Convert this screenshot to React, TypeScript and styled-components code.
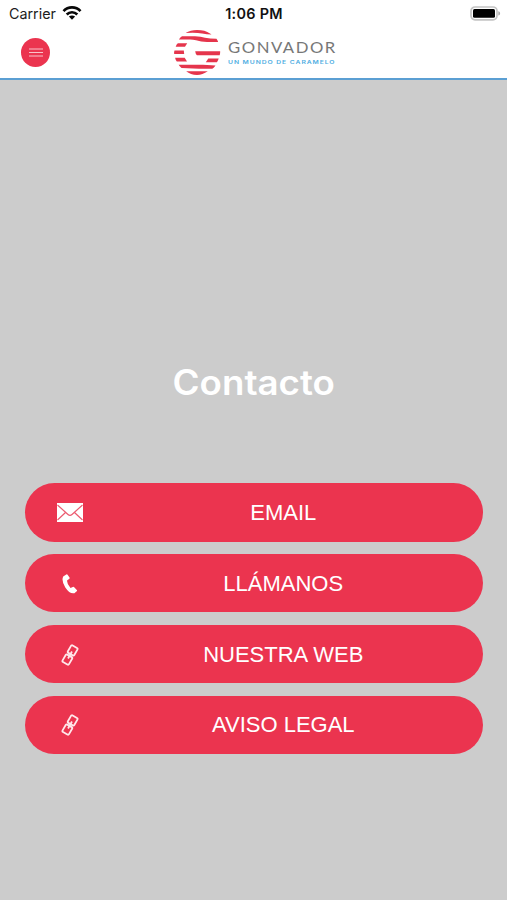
import React from "react";
import styled, { createGlobalStyle } from "styled-components";

const GlobalStyle = createGlobalStyle`
  * { box-sizing: border-box; }
  body { margin: 0; background: #ccc; }
`;

const Screen = styled.div`
  width: 507px;
  height: 900px;
  display: flex;
  flex-direction: column;
  background: #cccccc;
  overflow: hidden;
`;

const StatusBar = styled.div`
  height: 28px;
  display: grid;
  grid-template-columns: 1fr auto 1fr;
  align-items: center;
  padding: 0 6px 0 9px;
  background: #fff;
  color: #1c1c1c;
  font: 400 14.3px/28px Inter, sans-serif;
`;

const Carrier = styled.div`
  display: flex;
  align-items: center;
  gap: 6px;

  svg {
    margin-top: -2px;
  }
`;

const Clock = styled.div`
  font-weight: 600;
  font-size: 14.4px;
  letter-spacing: 0.3px;
  margin-left: -2px;
  color: #111;
`;

const BatterySlot = styled.div`
  display: flex;
  justify-content: flex-end;

  svg {
    margin-top: -2px;
  }
`;

const Header = styled.header`
  height: 52px;
  flex: none;
  display: flex;
  align-items: flex-start;
  background: #fff;
  border-bottom: 2px solid #5b9fd3;
  padding: 1px 0 0 21px;
`;

const MenuButton = styled.button`
  width: 29px;
  height: 29px;
  margin: 8.5px 123px 0 0;
  padding: 0;
  border: 0;
  border-radius: 50%;
  background: #eb344f;
  display: flex;
  align-items: center;
  justify-content: center;
`;

const Brand = styled.div`
  display: flex;
  gap: 6px;
`;

const BrandText = styled.div`
  padding-top: 9px;
  white-space: nowrap;
`;

const BrandName = styled.div`
  font: 400 16px/18px Lato, sans-serif;
  letter-spacing: 1.45px;
  transform: scaleX(1.045);
  transform-origin: left;
  color: #777;
`;

const BrandTagline = styled.div`
  font: 600 5.3px/12px Inter, sans-serif;
  letter-spacing: 0.75px;
  transform: scaleX(1.27);
  transform-origin: left;
  color: #4faee2;
`;

const Main = styled.main`
  flex: 1;
  padding: 281px 24.5px 0 25px;
`;

const Title = styled.h1`
  margin: 0 0 80px;
  font: 600 34.8px/42px Inter, sans-serif;
  transform: scaleX(1.055);
  text-align: center;
  color: #fff;
`;

const Actions = styled.nav`
  display: flex;
  flex-direction: column;
  gap: 12.4px;
`;

const Action = styled.button`
  height: 58.5px;
  display: grid;
  grid-template-columns: 89px 1fr;
  align-items: center;
  padding: 0 30px 0 0;
  border: 0;
  border-radius: 30px;
  background: #eb344f;
  color: #fff;
`;

const IconSlot = styled.span`
  display: flex;
  justify-content: center;
  padding-top: 1px;
`;

const Label = styled.span`
  font: 400 22px/28px "Liberation Sans", sans-serif;
  padding-top: 1px;
`;

const Wifi = () => (
  <svg width="20" height="16" viewBox="0 0 20 16" fill="none" stroke="#080808" strokeWidth="2.7">
    <path d="M1.5 6.1C6.2 1.2 13.8 1.2 18.5 6.1" />
    <path d="M4.7 9.5C7.7 6.5 12.3 6.5 15.3 9.5" />
    <path d="M10 14.7 6.9 11.6C8.7 10 11.3 10 13.1 11.6Z" fill="#080808" stroke="none" />
  </svg>
);

const Battery = () => (
  <svg width="31" height="15" viewBox="0 0 31 15">
    <rect x="1" y="1" width="26" height="12.8" rx="4" fill="#fff" stroke="#c4c4c4" strokeWidth="1.7" />
    <rect x="3" y="3" width="22" height="8.8" rx="1.5" fill="#000" />
    <path d="M28.3 5.2c2.4.6 2.4 3.8 0 4.4z" fill="#aaa" />
  </svg>
);

const MenuLines = () => (
  <svg width="14" height="9" viewBox="0 0 14 9" stroke="#fff" strokeOpacity=".7" strokeWidth="1">
    <path d="M0 1h14M0 4.5h14M0 8h14" />
  </svg>
);

const Logo = () => (
  <svg width="49" height="48" viewBox="0 0 49 48" fill="#e5354c">
    <path d="M12.5 4Q17.5 1 24 1Q32 1 37 4.4L38.5 5.4Q34 5.4 29 4.4Q24 3.6 12.5 4Z" />
    <path d="M5.9 10.4Q7.3 8.4 9 7.3H22Q28 7.6 32 8.8Q37 9.8 43.5 9.8Q44.8 11.5 45.2 13H34Q28 12.8 23 11.2Q20 10.4 17 10.4Z" />
    <path d="M2.7 17.8Q3.3 15.6 4.8 14.3H14.2L12 17.8Z" />
    <path d="M1.2 25Q.8 23 1.5 21.4H10.8L11.2 25Z" />
    <path d="M22.2 22.2H47.2Q47.2 24.4 46.7 26.2H24Q22.4 24.8 22.2 22.2Z" />
    <path d="M2.1 28.8H11.7L14 32.5H3.8Q2.4 30.8 2.1 28.8Z" />
    <path d="M35.3 29.5H45.7Q45 31.8 43.8 33.3H32.8Z" />
    <path d="M5.6 35.8H30L42.5 36.5Q41 38.8 39.3 39.7H26L8.5 39.1Q6.9 37.8 5.6 35.8Z" />
    <path d="M13.2 42.3H34.8Q29.5 46 24 46Q17.5 46 13.2 42.3Z" />
  </svg>
);

const Envelope = () => (
  <svg width="26" height="19" viewBox="0 0 26 19">
    <path d="M0 0h26v19H0z" fill="#fff" />
    <path d="M.5 2 11 11.5q2 1.8 4 0L25.5 2M.5 17 8.5 9.5M25.5 17 17.5 9.5" fill="none" stroke="#eb5b70" strokeWidth="1.2" />
  </svg>
);

const Phone = () => (
  <svg width="16" height="20" viewBox="0 0 16 20" fill="#fff">
    <path d="M1.2 2.5 4.3.5Q5-.1 5.6.7L7.5 3.5Q8 4.4 7.1 5L5.2 6.3Q4.6 9.8 8.5 14L10.8 13Q11.6 12.6 12.2 13.3L14.8 15.9Q15.4 16.6 14.7 17.3L12.4 19.2Q7.8 20.3 3.3 13.5-.9 6.5 1.2 2.5Z" />
  </svg>
);

const Chain = () => (
  <svg width="18" height="22" viewBox="0 0 18 22" fill="none" stroke="#ffe8eb" strokeWidth="1.8">
    <g transform="rotate(30 9 11)">
      <rect x="5.3" y="1.4" width="7.4" height="8.6" rx="1.2" />
      <rect x="5.3" y="12" width="7.4" height="8.6" rx="1.2" />
      <path d="M9 7v8" />
    </g>
  </svg>
);

const actions = [
  { label: "EMAIL", icon: <Envelope /> },
  { label: "LLÁMANOS", icon: <Phone /> },
  { label: "NUESTRA WEB", icon: <Chain /> },
  { label: "AVISO LEGAL", icon: <Chain /> },
];

export default function App() {
  return (
    <Screen>
      <GlobalStyle />
      <StatusBar>
        <Carrier>Carrier <Wifi /></Carrier>
        <Clock>1:06 PM</Clock>
        <BatterySlot><Battery /></BatterySlot>
      </StatusBar>
      <Header>
        <MenuButton aria-label="Menú"><MenuLines /></MenuButton>
        <Brand>
          <Logo />
          <BrandText>
            <BrandName>GONVADOR</BrandName>
            <BrandTagline>UN MUNDO DE CARAMELO</BrandTagline>
          </BrandText>
        </Brand>
      </Header>
      <Main>
        <Title>Contacto</Title>
        <Actions>
          {actions.map((a) => (
            <Action key={a.label}>
              <IconSlot>{a.icon}</IconSlot>
              <Label>{a.label}</Label>
            </Action>
          ))}
        </Actions>
      </Main>
    </Screen>
  );
}
